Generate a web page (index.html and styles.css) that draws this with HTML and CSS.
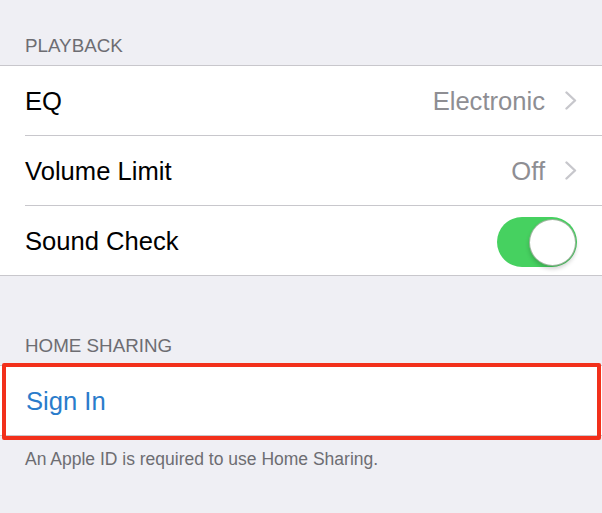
FILE: index.html
```html
<!DOCTYPE html>
<html lang="en">
<head>
    <meta charset="UTF-8">
    <meta name="viewport" content="width=device-width, initial-scale=1.0">
    <title>Music Settings</title>
    <link rel="stylesheet" href="styles.css">
</head>
<body>
    <!-- Playback -->
    <div class="section-header first">PLAYBACK</div>
    <div class="group">
        <div class="row">
            <span class="label">EQ</span>
            <span class="value">Electronic</span>
            <svg class="chevron" width="12" height="19" viewBox="0 0 12 19">
                <polyline points="1.5,1.5 10,9.5 1.5,17.5" fill="none" stroke="#c7c7cc" stroke-width="2.4" stroke-linecap="round" stroke-linejoin="round"/>
            </svg>
        </div>
        <div class="row">
            <span class="label">Volume Limit</span>
            <span class="value">Off</span>
            <svg class="chevron" width="12" height="19" viewBox="0 0 12 19">
                <polyline points="1.5,1.5 10,9.5 1.5,17.5" fill="none" stroke="#c7c7cc" stroke-width="2.4" stroke-linecap="round" stroke-linejoin="round"/>
            </svg>
        </div>
        <div class="row">
            <span class="label">Sound Check</span>
            <div class="toggle on"><div class="knob"></div></div>
        </div>
    </div>

    <!-- Home Sharing -->
    <div class="section-header">HOME SHARING</div>
    <div class="group marked">
        <div class="row">
            <span class="label link">Sign In</span>
        </div>
    </div>
    <div class="section-footer">An Apple ID is required to use Home Sharing.</div>
</body>
</html>
```

FILE: styles.css
```css
body {
    margin: 0;
    background-color: #efeff4;
    font-family: "Liberation Sans", Arial, sans-serif;
    width: 602px;
    height: 513px;
    overflow: hidden;
}
.section-header {
    font-size: 18.8px;
    line-height: 22px;
    color: #6d6d72;
    padding: 59px 25px 8px;
}
.section-header.first {
    padding-top: 35px;
}
.group {
    background: #ffffff;
    border-top: 1px solid #c8c7cc;
    border-bottom: 1px solid #c8c7cc;
    padding-left: 25px;
}
.group.marked {
    position: relative;
}
/* red annotation box round the Sign In cell */
.group.marked::after {
    content: "";
    position: absolute;
    top: -3px;
    bottom: -5px;
    left: 2px;
    right: 1px;
    border: 4px solid #f2301b;
    border-radius: 2px;
}
.row {
    height: 69px;
    display: flex;
    align-items: center;
    padding-right: 25px;
    border-bottom: 1px solid #c8c7cc;
}
.row:last-child {
    border-bottom: none;
}
.label {
    font-size: 25.6px;
    color: #000000;
    flex: 1;
    padding-top: 2px;
}
.label.link {
    color: #2a7ccb;
    padding-left: 1px;
}
.value {
    font-size: 25.6px;
    color: #8e8e93;
    margin-right: 20px;
    padding-top: 2px;
}
.chevron {
    display: block;
}
.toggle {
    width: 80px;
    height: 50px;
    border-radius: 25px;
    background: #e5e5ea;
    position: relative;
    margin-top: 3px;
}
.toggle.on {
    background: #46d160;
}
.knob {
    position: absolute;
    top: 2px;
    right: 1px;
    width: 45px;
    height: 45px;
    border-radius: 50%;
    background: #ffffff;
    border: 1px solid rgba(40, 90, 40, 0.45);
    box-shadow: 0 3px 4px rgba(0, 0, 0, 0.18);
}
.section-footer {
    font-size: 17.5px;
    line-height: 21px;
    color: #6d6d72;
    padding: 13px 25px 0;
}
```
